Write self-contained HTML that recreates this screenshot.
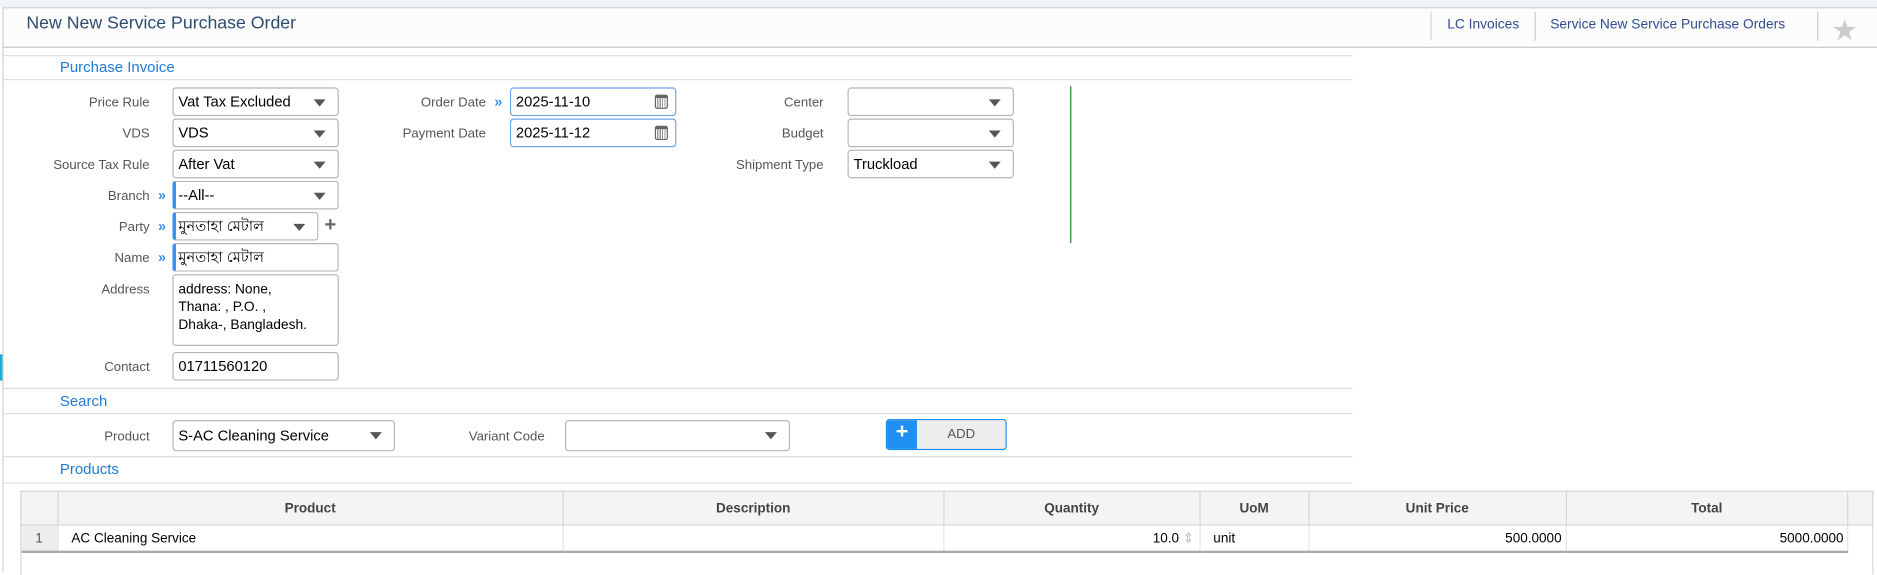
<!DOCTYPE html><html><head><style>
body{margin:0;width:1877px;height:569px;background:#fff;font-family:"Liberation Sans","Noto Sans CJK SC",sans-serif;position:relative;overflow:hidden;color:#000}
#w{position:absolute;left:0;top:0;width:1568px;height:476px;transform:scale(1.19707);transform-origin:0 0}
.a{position:absolute}
.lbl{position:absolute;font-size:11px;color:#555;text-align:right;margin-top:2px}
.inp{position:absolute;border:1px solid #b5b5b5;border-radius:3px;box-sizing:border-box;height:24px;font-size:12.3px;line-height:22px;padding-left:4px;background:#fff}
.sel::after{content:"";position:absolute;right:10px;top:9px;border-left:5px solid transparent;border-right:5px solid transparent;border-top:6px solid #555}
.foc{border-left:3px solid #3b8fe8;padding-left:2px}
.blue{border-color:#6fa6ec}
.chev{position:absolute;color:#3b8fe8;font-size:12px;font-weight:bold;margin-top:2px}
.hl{position:absolute;height:1px;background:#dcdce6}
.sec{position:absolute;font-size:12.5px;color:#1e7bd0}
.cal{position:absolute;right:6px;top:5px;width:11px;height:12px;border:1px solid #666;border-top:3px solid #666;box-sizing:border-box;border-radius:2px;background:repeating-linear-gradient(90deg,#fff 0 1px,#999 1px 2px)}
table{position:absolute;border-collapse:collapse;font-size:11.3px}
th{background:#f4f4f4;color:#444;font-weight:bold;height:25px;border:1px solid #d6d6d6;font-size:11.3px}
td{height:21px;border-right:1px solid #e4e4e4;border-bottom:2px solid #aaa;padding:0 6px}
</style></head><body><div id="w">
<div class="a" style="left:0;top:0;width:1568px;height:6px;background:#eef6f8"></div>
<div class="a" style="left:2px;top:6px;width:1566px;height:32px;background:#fcfcfd;border-top:1px solid #d0d0d0;border-bottom:1px solid #c8c8c8;border-left:1px solid #d0d0d0"></div>
<div class="a" style="left:2px;top:38px;width:1px;height:440px;background:#d0d0d0"></div>
<div class="a" style="left:0;top:296px;width:2px;height:22px;background:#1ab0d8"></div>
<div class="a" style="left:22px;top:12px;font-size:14.8px;color:#2f4d6e">New New Service Purchase Order</div>
<div class="a" style="left:1195px;top:10px;width:1px;height:24px;border-left:1px solid #ccc;border-radius:4px"></div>
<div class="a" style="left:1209px;top:15px;font-size:11.5px;color:#2f4d8e">LC Invoices</div>
<div class="a" style="left:1282px;top:10px;width:1px;height:24px;border-left:1px solid #ccc"></div>
<div class="a" style="left:1295px;top:15px;font-size:11.5px;color:#2f4d8e">Service New Service Purchase Orders</div>
<div class="a" style="left:1518px;top:10px;width:1px;height:24px;border-left:1px solid #ccc"></div>
<div class="a" style="left:1531px;top:9px;font-size:20px;color:#ccc">★</div>

<div class="hl" style="left:3px;top:46px;width:1127px"></div>
<div class="sec" style="left:50px;top:49px">Purchase Invoice</div>
<div class="hl" style="left:3px;top:66px;width:1127px"></div>

<div class="lbl" style="left:0;width:125px;top:78px">Price Rule</div>
<div class="inp sel" style="left:144px;top:73px;width:139px">Vat Tax Excluded</div>
<div class="lbl" style="left:0;width:125px;top:104px">VDS</div>
<div class="inp sel" style="left:144px;top:99px;width:139px">VDS</div>
<div class="lbl" style="left:0;width:125px;top:130px">Source Tax Rule</div>
<div class="inp sel" style="left:144px;top:125px;width:139px">After Vat</div>
<div class="lbl" style="left:0;width:125px;top:156px">Branch</div><div class="chev" style="left:132px;top:154px">»</div>
<div class="inp sel foc" style="left:144px;top:151px;width:139px">--All--</div>
<div class="lbl" style="left:0;width:125px;top:182px">Party</div><div class="chev" style="left:132px;top:180px">»</div>
<div class="inp sel foc" style="left:144px;top:177px;width:122px">মুনতাহা মেটাল</div>
<div class="a" style="left:271px;top:178px;font-size:17px;font-weight:bold;color:#666">+</div>
<div class="lbl" style="left:0;width:125px;top:208px">Name</div><div class="chev" style="left:132px;top:206px">»</div>
<div class="inp foc" style="left:144px;top:203px;width:139px">মুনতাহা মেটাল</div>
<div class="lbl" style="left:0;width:125px;top:234px">Address</div>
<div class="inp" style="left:144px;top:229px;width:139px;height:60px;line-height:15px;padding-top:5px;font-size:11.5px">address: None,<br>Thana: , P.O. ,<br>Dhaka-, Bangladesh.</div>
<div class="lbl" style="left:0;width:125px;top:299px">Contact</div>
<div class="inp" style="left:144px;top:294px;width:139px">01711560120</div>

<div class="lbl" style="left:250px;width:156px;top:78px">Order Date</div><div class="chev" style="left:413px;top:76px">»</div>
<div class="inp blue" style="left:426px;top:73px;width:139px">2025-11-10<span class="cal"></span></div>
<div class="lbl" style="left:250px;width:156px;top:104px">Payment Date</div>
<div class="inp blue" style="left:426px;top:99px;width:139px">2025-11-12<span class="cal"></span></div>

<div class="lbl" style="left:550px;width:138px;top:78px">Center</div>
<div class="inp sel" style="left:708px;top:73px;width:139px"></div>
<div class="lbl" style="left:550px;width:138px;top:104px">Budget</div>
<div class="inp sel" style="left:708px;top:99px;width:139px"></div>
<div class="lbl" style="left:550px;width:138px;top:130px">Shipment Type</div>
<div class="inp sel" style="left:708px;top:125px;width:139px">Truckload</div>
<div class="a" style="left:894px;top:72px;width:1px;height:131px;background:#1a8a1a"></div>

<div class="hl" style="left:3px;top:324px;width:1127px"></div>
<div class="sec" style="left:50px;top:328px">Search</div>
<div class="hl" style="left:3px;top:345px;width:1127px"></div>
<div class="lbl" style="left:0;width:125px;top:357px">Product</div>
<div class="inp sel" style="left:144px;top:351px;width:186px;height:26px;line-height:24px">S-AC Cleaning Service</div>
<div class="lbl" style="left:350px;width:105px;top:357px">Variant Code</div>
<div class="inp sel" style="left:472px;top:351px;width:188px;height:26px"></div>
<div class="a" style="left:740px;top:350px;width:101px;height:26px;border:1px solid #1e8ff0;border-radius:3px;box-sizing:border-box;background:#ededed;overflow:hidden">
<div class="a" style="left:0;top:0;width:25px;height:26px;background:#1e8ff0;color:#fff;font-weight:bold;font-size:18px;text-align:center;line-height:18px">+</div>
<div class="a" style="left:25px;top:6px;width:74px;text-align:center;font-size:11px;color:#555">ADD</div></div>
<div class="hl" style="left:3px;top:381px;width:1127px"></div>
<div class="sec" style="left:50px;top:385px">Products</div>
<div class="hl" style="left:3px;top:403px;width:1127px"></div>

<div class="a" style="left:17px;top:410px;width:1548px;height:70px;border:1px solid #d6d6d6;border-bottom:none;box-sizing:border-box"></div>
<table style="left:17px;top:410px;width:1548px">
<tr><th style="width:28px"></th><th style="width:424px">Product</th><th style="width:319px">Description</th><th style="width:213px">Quantity</th><th style="width:89px">UoM</th><th style="width:214px">Unit Price</th><th style="width:235px">Total</th><th style="width:18px"></th></tr>
<tr><td style="background:#eee;color:#555;text-align:center;padding:0">1</td><td style="padding-left:11px">AC Cleaning Service</td><td></td><td style="text-align:right;padding-right:4px">10.0<span style="color:#bbb"> ⇕</span></td><td style="padding-left:11px">unit</td><td style="text-align:right;padding-right:3px">500.0000</td><td style="text-align:right;padding-right:3px">5000.0000</td><td style="border:none"></td></tr>
</table>
</div></body></html>
